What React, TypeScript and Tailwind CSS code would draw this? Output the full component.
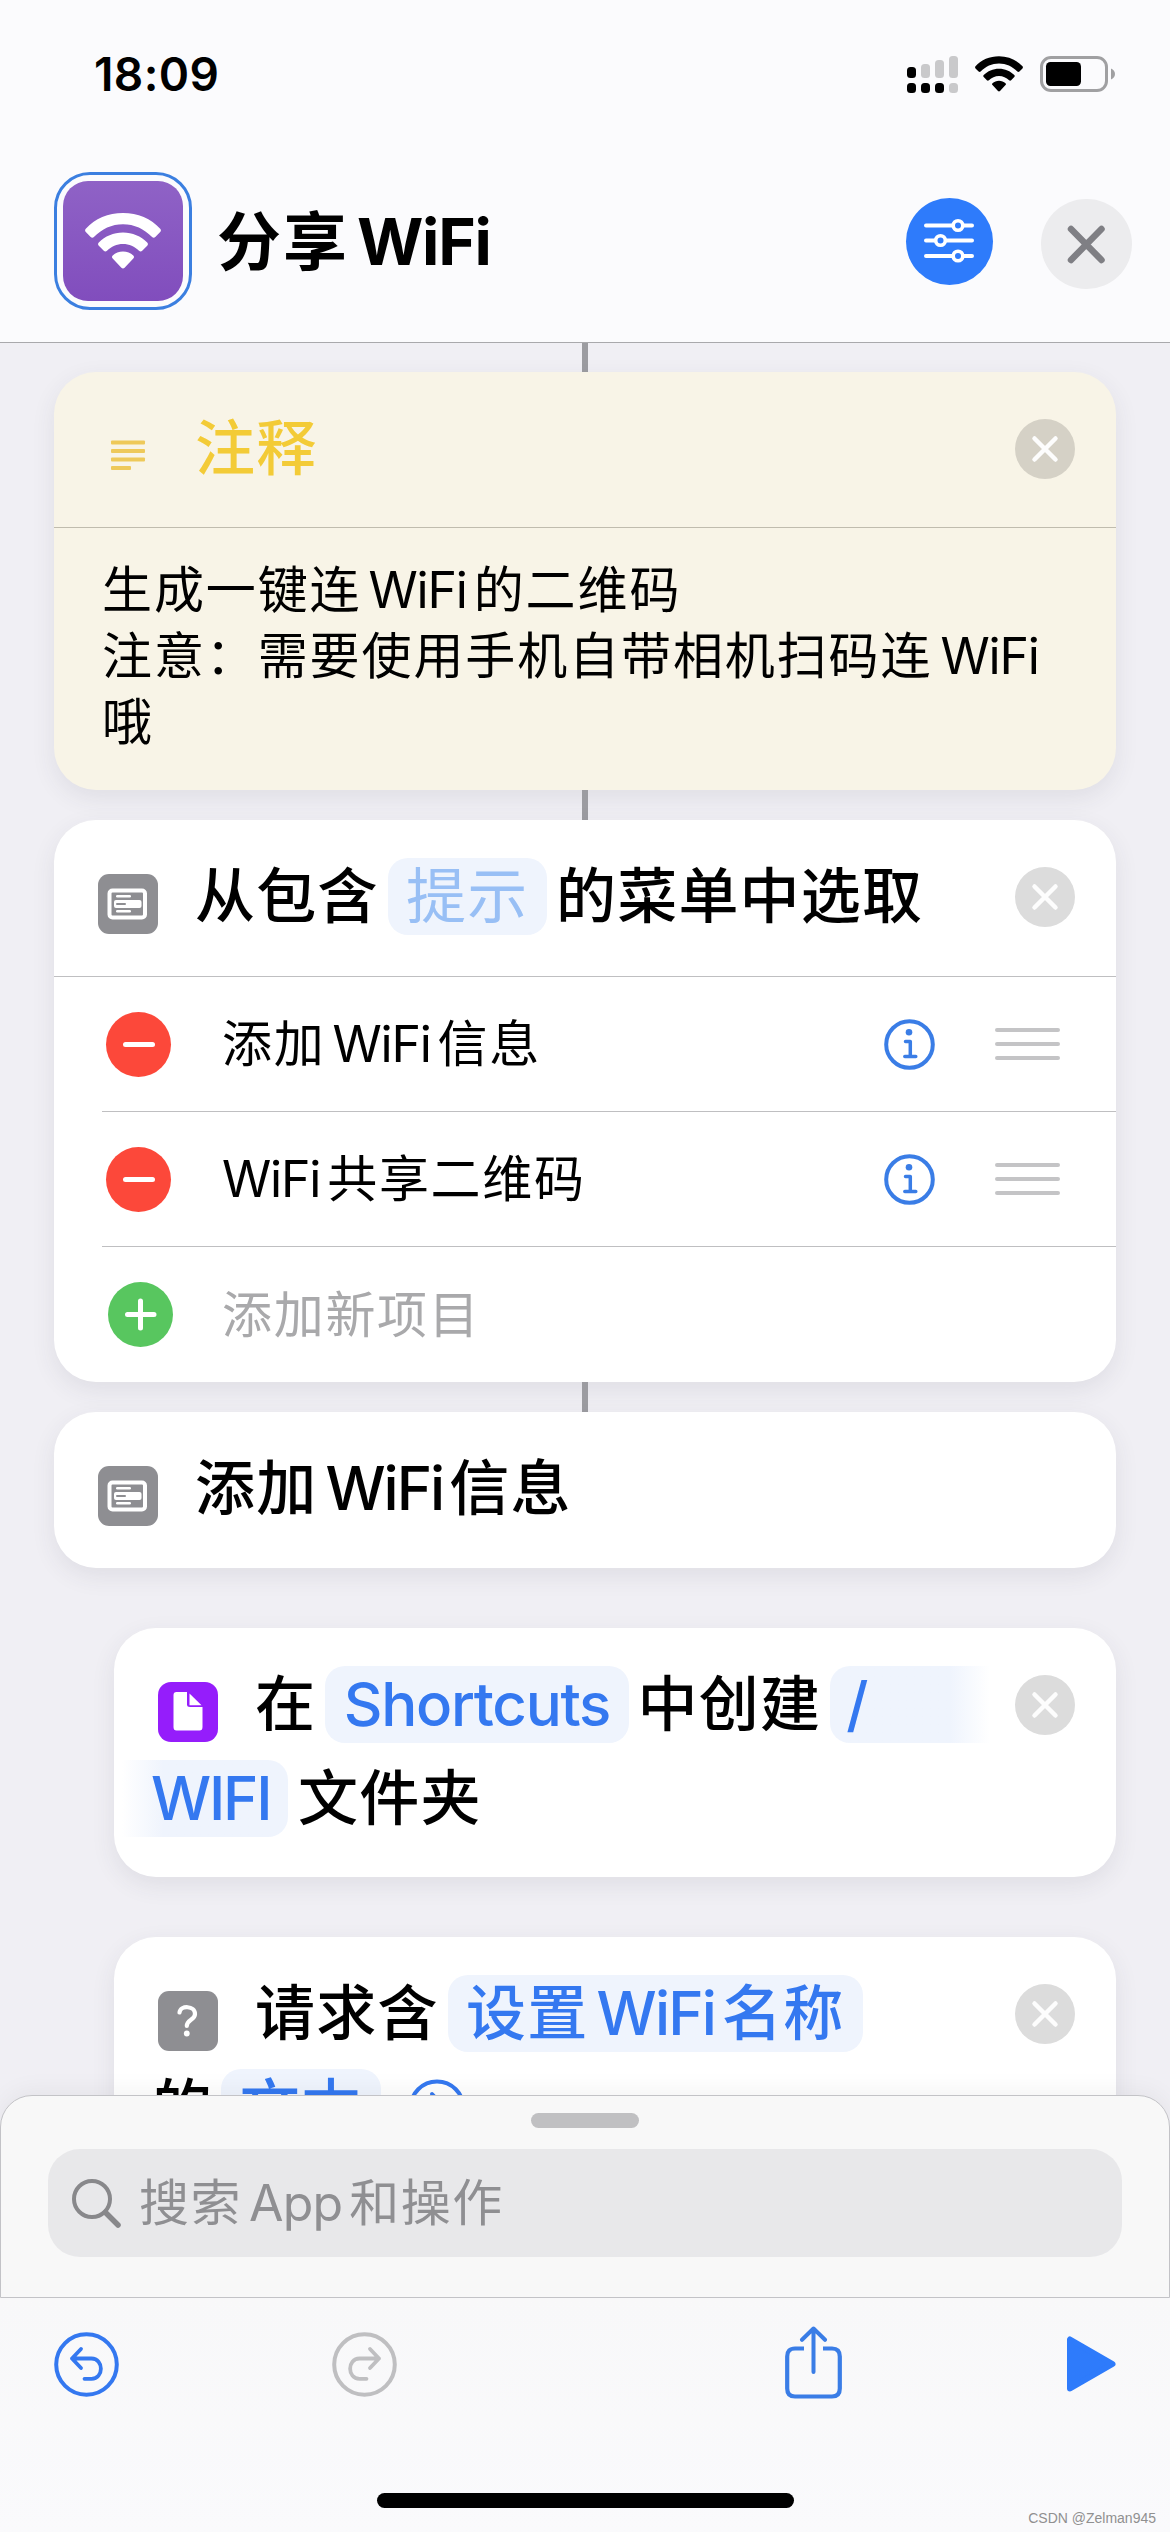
import type { ReactNode } from "react";

function WifiGlyph({ className }: { className: string }) {
  return (
    <svg viewBox="0 0 76 56" className={className} fill="currentColor">
      <path d="M38 0C23.300 0 9.800 5.700 0.800 15.800c-1 1.100-0.900 2.300 0 3.300l4.900 5c1 1 2.300 0.900 3.200 0C16.700 16 26.800 11.300 38 11.300s21.300 4.700 29.100 12.800c0.900 0.900 2.200 1 3.200 0l4.900-5c0.900-1 1-2.200 0-3.300C66.200 5.700 52.700 0 38 0z" />
      <path d="M38 19.500c-9.500 0-18 3.700-24.200 10-1 1-0.900 2.300 0 3.300l5 5c1 1 2.200 0.900 3.200 0C26.300 33.600 31.800 31 38 31s11.700 2.600 16 6.800c1 0.900 2.200 1 3.200 0l5-5c0.900-1 1-2.300 0-3.300-6.200-6.300-14.700-10-24.200-10z" />
      <path d="M38 38.500c-4 0-7.600 1.500-10.300 4-1 0.900-0.900 2.200 0 3.100l8.700 9.200c1 1 2.200 1 3.200 0l8.700-9.200c0.900-0.900 1-2.200 0-3.100-2.700-2.500-6.300-4-10.300-4z" />
    </svg>
  );
}

function StatusBar() {
  return (
    <div className="flex h-[148px] items-center pl-[94px] pr-[54px]">
      <span className="flex-1 text-[46px] leading-none font-semibold tracking-[0.400px]">18:09</span>
      <svg viewBox="0 0 51 37" className="h-[37px] w-[51px]">
        <rect x="0" y="11" width="9" height="11" rx="3.500" />
        <rect x="14" y="8" width="9" height="14" rx="3.500" fill="#c9c9cb" />
        <rect x="28" y="4" width="9" height="18" rx="3.500" fill="#c9c9cb" />
        <rect x="42" y="0" width="9" height="22" rx="3.500" fill="#c9c9cb" />
        <rect x="0" y="27" width="9" height="10" rx="3.500" />
        <rect x="14" y="27" width="9" height="10" rx="3.500" />
        <rect x="28" y="27" width="9" height="10" rx="3.500" />
        <rect x="42" y="27" width="9" height="10" rx="3.500" fill="#c9c9cb" />
      </svg>
      <WifiGlyph className="ml-[17px] h-[36px] w-[48px]" />
      <svg viewBox="0 0 76 36" className="ml-[17px] h-[36px] w-[76px]">
        <rect x="1.500" y="1.500" width="65" height="33" rx="9.500" fill="none" stroke="#a0a0a2" strokeWidth="3" />
        <rect x="6" y="6" width="35" height="24" rx="4.500" />
        <path d="M71 12.500c2.500 1 4 3 4 5.500s-1.500 4.500-4 5.500z" fill="#a0a0a2" />
      </svg>
    </div>
  );
}

function Header() {
  return (
    <div className="flex h-[194px] pl-[54px] pr-[38px]">
      <div className="mt-[24px] flex h-[138px] w-[138px] items-center justify-center rounded-[36px] border-[3px] border-[#3b7fe0]">
        <div className="flex h-[120px] w-[120px] items-center justify-center rounded-[25px] bg-gradient-to-b from-[#8f62c6] to-[#814dbd] text-white">
          <WifiGlyph className="h-[56px] w-[76px]" />
        </div>
      </div>
      <h1 className="mt-[54px] ml-[25px] flex-1 text-[64px] leading-[80px] font-bold tracking-[2px] whitespace-nowrap">
        分享<span className="ml-[8px] tracking-[-1.300px]">WiFi</span>
      </h1>
      <div className="mt-[50px] h-[87px] w-[87px] rounded-full bg-[#2e7bfb]">
        <svg viewBox="0 0 87 87" className="h-full w-full" fill="none" stroke="white" strokeWidth="4" strokeLinecap="round">
          <path d="M20 27.500H46M58 27.500H66M20 42.500H28.500M40.500 42.500H66M20 58H46M58 58H66" />
          <circle cx="52" cy="27.500" r="4.800" strokeWidth="3.600" />
          <circle cx="34.500" cy="42.500" r="4.800" strokeWidth="3.600" />
          <circle cx="52" cy="58" r="4.800" strokeWidth="3.600" />
        </svg>
      </div>
      <div className="mt-[51px] ml-[48px] h-[90px] w-[91px] rounded-full bg-[#ececee]">
        <svg viewBox="0 0 91 90" className="h-full w-full" fill="none" stroke="#7f7f84" strokeWidth="6.500" strokeLinecap="round">
          <path d="M30 30L60.500 61M60.500 30L30 61" />
        </svg>
      </div>
    </div>
  );
}

function CloseDot({ tone = "bg-[#dcdcdc]" }: { tone?: string }) {
  return (
    <div className={"h-[60px] w-[60px] shrink-0 rounded-full " + tone}>
      <svg viewBox="0 0 60 60" className="h-full w-full" fill="none" stroke="#fdfdfd" strokeWidth="4.500" strokeLinecap="round">
        <path d="M19.500 19.500L40.500 40.500M40.500 19.500L19.500 40.500" />
      </svg>
    </div>
  );
}

function MenuIcon() {
  return (
    <svg viewBox="0 0 60 60" className="mt-[14px] h-[60px] w-[60px]">
      <rect width="60" height="60" rx="11" fill="#8e8e92" />
      <rect x="11.500" y="16.500" width="35.500" height="27" rx="3" fill="none" stroke="white" strokeWidth="4" />
      <rect x="18" y="21" width="15" height="2.400" rx="1.200" fill="white" />
      <rect x="16" y="26" width="27.500" height="8" rx="2" fill="white" />
      <rect x="18" y="29" width="10" height="2" rx="1" fill="#8e8e92" />
      <rect x="18" y="36" width="15" height="2.400" rx="1.200" fill="white" />
    </svg>
  );
}

function FileIcon() {
  return (
    <svg viewBox="0 0 60 60" className="mt-[14px] h-[60px] w-[60px]">
      <rect width="60" height="60" rx="13" fill="#951dfb" />
      <path d="M18.500 10H29V22.500Q29 25 32 25H44.500V45Q44.500 48.500 41.500 48.500H18.500Q15.500 48.500 15.500 45V13Q15.500 10 18.500 10Z" fill="white" />
      <path d="M31.500 11.500L43.500 23.200H31.500Z" fill="white" />
    </svg>
  );
}

function QuestionIcon() {
  return (
    <svg viewBox="0 0 60 60" className="mt-[14px] h-[60px] w-[60px]">
      <rect width="60" height="60" rx="11" fill="#8e8e92" />
      <path d="M21.500 21.500C22.500 14 37 14.500 37 23C37 29 28.800 28.500 28.800 35" fill="none" stroke="white" strokeWidth="4.200" strokeLinecap="round" />
      <circle cx="28.800" cy="42.500" r="2.900" fill="white" />
    </svg>
  );
}

function Connector({ height = "h-[30px]" }: { height?: string }) {
  return <div className={"mx-auto w-[6px] bg-[#9c9ca1] " + height} />;
}

function Card({ children, className }: { children: ReactNode; className: string }) {
  return (
    <section className={"rounded-[42px] shadow-[0_8px_24px_rgba(60,60,80,0.09)] " + className}>{children}</section>
  );
}

function TitleRow({ icon, children, close }: { icon: ReactNode; children: ReactNode; close?: ReactNode }) {
  return (
    <div className="flex h-[77px] items-center pl-[44px] pr-[41px]">
      {icon}
      <div className="ml-[37px] flex flex-1 items-center gap-[9px] text-[60px] leading-[77px] font-medium tracking-[1.200px] whitespace-nowrap">
        {children}
      </div>
      {close}
    </div>
  );
}

function Pill({ children, className = "text-[#3478f0]" }: { children: ReactNode; className?: string }) {
  return (
    <span className={"h-[77px] rounded-[20px] bg-[#eff4fd] px-[18.500px] " + className}>{children}</span>
  );
}

function InfoIcon() {
  return (
    <svg viewBox="0 0 51 51" className="h-[51px] w-[51px]" fill="none" stroke="#3a7de6" strokeWidth="4" strokeLinecap="round" strokeLinejoin="round">
      <circle cx="25.500" cy="25.500" r="23.300" />
      <circle cx="25" cy="13.300" r="3.300" fill="#3a7de6" stroke="none" />
      <path d="M21.500 22.500H26.300V37.200M20.800 37.500H31.800" strokeWidth="3.500" />
    </svg>
  );
}

function Handle() {
  return (
    <div className="ml-[60px] flex w-[65px] flex-col gap-[10px]">
      <div className="h-[4px] rounded-full bg-[#c4c4c6]" />
      <div className="h-[4px] rounded-full bg-[#c4c4c6]" />
      <div className="h-[4px] rounded-full bg-[#c4c4c6]" />
    </div>
  );
}

function MenuRow({ children }: { children: ReactNode }) {
  return (
    <div className="ml-[48px] flex h-[135px] items-center border-b border-[#bfbfc1] pl-[4px] pr-[56px]">
      <div className="flex h-[65px] w-[65px] items-center justify-center rounded-full bg-[#fc483a]">
        <div className="h-[5px] w-[32px] rounded-full bg-white" />
      </div>
      <span className="ml-[51px] flex-1 text-[50px] leading-none tracking-[1.700px] whitespace-nowrap">{children}</span>
      <InfoIcon />
      <Handle />
    </div>
  );
}

function CommentCard() {
  return (
    <Card className="mx-[54px] h-[418px] bg-[#f8f4e7]">
      <div className="h-[156px] border-b border-[#c0bcae] pt-[38px]">
        <TitleRow
          icon={
            <svg viewBox="0 0 60 60" className="mt-[14px] h-[60px] w-[60px]" fill="#eec95a">
              <rect x="13" y="14.500" width="34" height="4" rx="1" />
              <rect x="13" y="23" width="34" height="4" rx="1" />
              <rect x="13" y="31.500" width="34" height="4" rx="1" />
              <rect x="13" y="40" width="20" height="4" rx="1" />
            </svg>
          }
          close={<CloseDot tone="bg-[#d5d1c6]" />}
        >
          <span className="text-[#f3cb37]">注释</span>
        </TitleRow>
      </div>
      <p className="pt-[29px] pl-[48px] text-[50px] leading-[66px] tracking-[1.900px] whitespace-nowrap">
        生成一键连<span className="mx-[7px] tracking-[-1.200px]">WiFi</span>的二维码
        <br />
        注意：需要使用手机自带相机扫码连<span className="ml-[8px] tracking-[-1.200px]">WiFi</span>
        <br />哦
      </p>
    </Card>
  );
}

function MenuCard() {
  return (
    <Card className="mx-[54px] h-[562px] bg-white">
      <div className="h-[157px] border-b border-[#bfbfc1] pt-[38px]">
        <TitleRow icon={<MenuIcon />} close={<CloseDot />}>
          <span>从包含</span>
          <Pill className="font-normal text-[#98bff5]">提示</Pill>
          <span>的菜单中选取</span>
        </TitleRow>
      </div>
      <MenuRow>
        添加<span className="mx-[7px] tracking-[-1.200px]">WiFi</span>信息
      </MenuRow>
      <MenuRow>
        <span className="mr-[7px] tracking-[-1.200px]">WiFi</span>共享二维码
      </MenuRow>
      <div className="ml-[54px] flex h-[135px] items-center">
        <svg viewBox="0 0 65 65" className="h-[65px] w-[65px]">
          <circle cx="32.500" cy="32.500" r="32.500" fill="#58c65f" />
          <path d="M19.500 32.500H46M32.500 19V46" stroke="white" strokeWidth="5" strokeLinecap="round" />
        </svg>
        <span className="ml-[49px] text-[50px] leading-none tracking-[1.700px] text-[#a9a9ab]">添加新项目</span>
      </div>
    </Card>
  );
}

function Actions() {
  return (
    <main className="h-[1784px] overflow-hidden bg-[#f0eff4]">
      <Connector height="h-[29px]" />
      <CommentCard />
      <Connector />
      <MenuCard />
      <Connector />
      <Card className="mx-[54px] h-[156px] bg-white pt-[38px]">
        <TitleRow icon={<MenuIcon />}>
          <span>
            添加<span className="mr-[6px] ml-[8px] tracking-[-2px]">WiFi</span>信息
          </span>
        </TitleRow>
      </Card>
      <Card className="mt-[60px] mr-[54px] ml-[114px] h-[249px] bg-white pt-[38px]">
        <TitleRow icon={<FileIcon />} close={<CloseDot />}>
          <span>在</span>
          <Pill className="tracking-[-1.300px] text-[#3478f0]">Shortcuts</Pill>
          <span>中创建</span>
          <span className="h-[77px] w-[160px] rounded-l-[20px] bg-gradient-to-r from-[#eff4fd] from-75% to-white pl-[16px] text-[#3478f0]">/</span>
        </TitleRow>
        <div className="mt-[17px] flex items-center gap-[10px] pl-[8px] text-[60px] leading-[77px] font-medium tracking-[1.200px]">
          <span className="h-[77px] w-[166px] rounded-r-[20px] bg-gradient-to-l from-[#eff4fd] from-75% to-white pl-[29px] tracking-[-2.200px] text-[#3478f0]">
            WIFI
          </span>
          <span>文件夹</span>
        </div>
      </Card>
      <Card className="mt-[60px] mr-[54px] ml-[114px] h-[249px] bg-white pt-[38px]">
        <TitleRow icon={<QuestionIcon />} close={<CloseDot />}>
          <span>请求含</span>
          <Pill>
            设置<span className="mr-[7px] ml-[8px] tracking-[-1.800px]">WiFi</span>名称
          </Pill>
        </TitleRow>
        <div className="mt-[17px] flex items-center gap-[8px] pl-[38px] text-[60px] leading-[77px] font-medium tracking-[1.200px]">
          <span>的</span>
          <Pill>文本</Pill>
          <svg viewBox="0 0 58 58" className="ml-[19px] h-[58px] w-[58px]" fill="none" stroke="#3478f0" strokeWidth="4" strokeLinecap="round">
            <circle cx="29" cy="29" r="26.500" />
            <path d="M24 15L37 29L24 43" />
          </svg>
        </div>
      </Card>
    </main>
  );
}

function SearchSheet() {
  return (
    <div className="relative -mt-[32px] h-[203px] rounded-t-[32px] border border-[#c3c3c7] bg-[#f8f8f8] shadow-[0_-4px_24px_rgba(0,0,0,0.05)]">
      <div className="mx-auto mt-[17px] h-[15px] w-[108px] rounded-full bg-[#c0c0c2]" />
      <div className="mx-[47px] mt-[21px] flex h-[108px] items-center rounded-[32px] bg-[#e8e8ea] pl-[24px]">
        <svg viewBox="0 0 49 49" className="h-[49px] w-[49px]" fill="none" stroke="#88888b" strokeWidth="4" strokeLinecap="round">
          <circle cx="20" cy="20" r="18" />
          <path d="M33.500 33.500L46 46" strokeWidth="5.500" />
        </svg>
        <span className="ml-[18px] text-[50px] leading-none tracking-[1.500px] whitespace-nowrap text-[#8f8f92]">
          搜索<span className="mx-[7px] tracking-[-0.800px]">App</span>和操作
        </span>
      </div>
    </div>
  );
}

function Toolbar() {
  return (
    <div className="relative flex flex-1 items-start bg-gradient-to-b from-[#f8f8f9] to-[#fafafc] pt-[28px] pl-[54px]">
      <svg viewBox="0 0 65 65" className="mt-[6px] h-[65px] w-[65px]" fill="none" stroke="#3478f0" strokeWidth="4" strokeLinecap="round" strokeLinejoin="round">
        <circle cx="32.500" cy="32.500" r="30.300" />
        <path d="M27 17L18 26.500L27 36M18 26.500H37.500C50 26.500 50 46.800 37.500 46.800H30.500" strokeWidth="3.800" />
      </svg>
      <svg viewBox="0 0 65 65" className="mt-[6px] ml-[213px] h-[65px] w-[65px]" fill="none" stroke="#bfbfc1" strokeWidth="4" strokeLinecap="round" strokeLinejoin="round">
        <circle cx="32.500" cy="32.500" r="30.300" />
        <path d="M38 17L47 26.500L38 36M47 26.500H27.500C15 26.500 15 46.800 27.500 46.800H34.500" strokeWidth="3.800" />
      </svg>
      <svg viewBox="0 0 57 73" className="ml-[388px] h-[73px] w-[57px]" fill="none" stroke="#3a7de6" strokeWidth="4.200" strokeLinecap="round" strokeLinejoin="round">
        <path d="M19 22.500H10Q2.200 22.500 2.200 30.500V62.500Q2.200 70.500 10 70.500H47Q54.800 70.500 54.800 62.500V30.500Q54.800 22.500 47 22.500H38" strokeLinecap="butt" />
        <path d="M28.500 46V2.500M17 13.800L28.500 2.500L40 13.800" strokeWidth="4" />
      </svg>
      <svg viewBox="0 0 49 56" className="mt-[10px] ml-[225px] h-[56px] w-[49px]">
        <path d="M3 3.500V52.500L45.500 28Z" fill="#2e7bfb" stroke="#2e7bfb" strokeWidth="6" strokeLinejoin="round" />
      </svg>
      <div className="absolute bottom-[24px] left-[377px] h-[15px] w-[417px] rounded-full bg-black" />
      <span className="absolute right-[14px] bottom-[7px] font-['Liberation_Sans'] text-[14px] leading-none whitespace-nowrap text-[#909090]">
        CSDN @Zelman945
      </span>
    </div>
  );
}

export default function App() {
  return (
    <div className="flex h-[2532px] w-[1170px] flex-col overflow-hidden bg-[#fbfbfd] font-['Inter','Noto_Sans_CJK_SC',sans-serif] text-black">
      <StatusBar />
      <Header />
      <div className="h-px shrink-0 bg-[#a9a9ac]" />
      <Actions />
      <SearchSheet />
      <Toolbar />
    </div>
  );
}
